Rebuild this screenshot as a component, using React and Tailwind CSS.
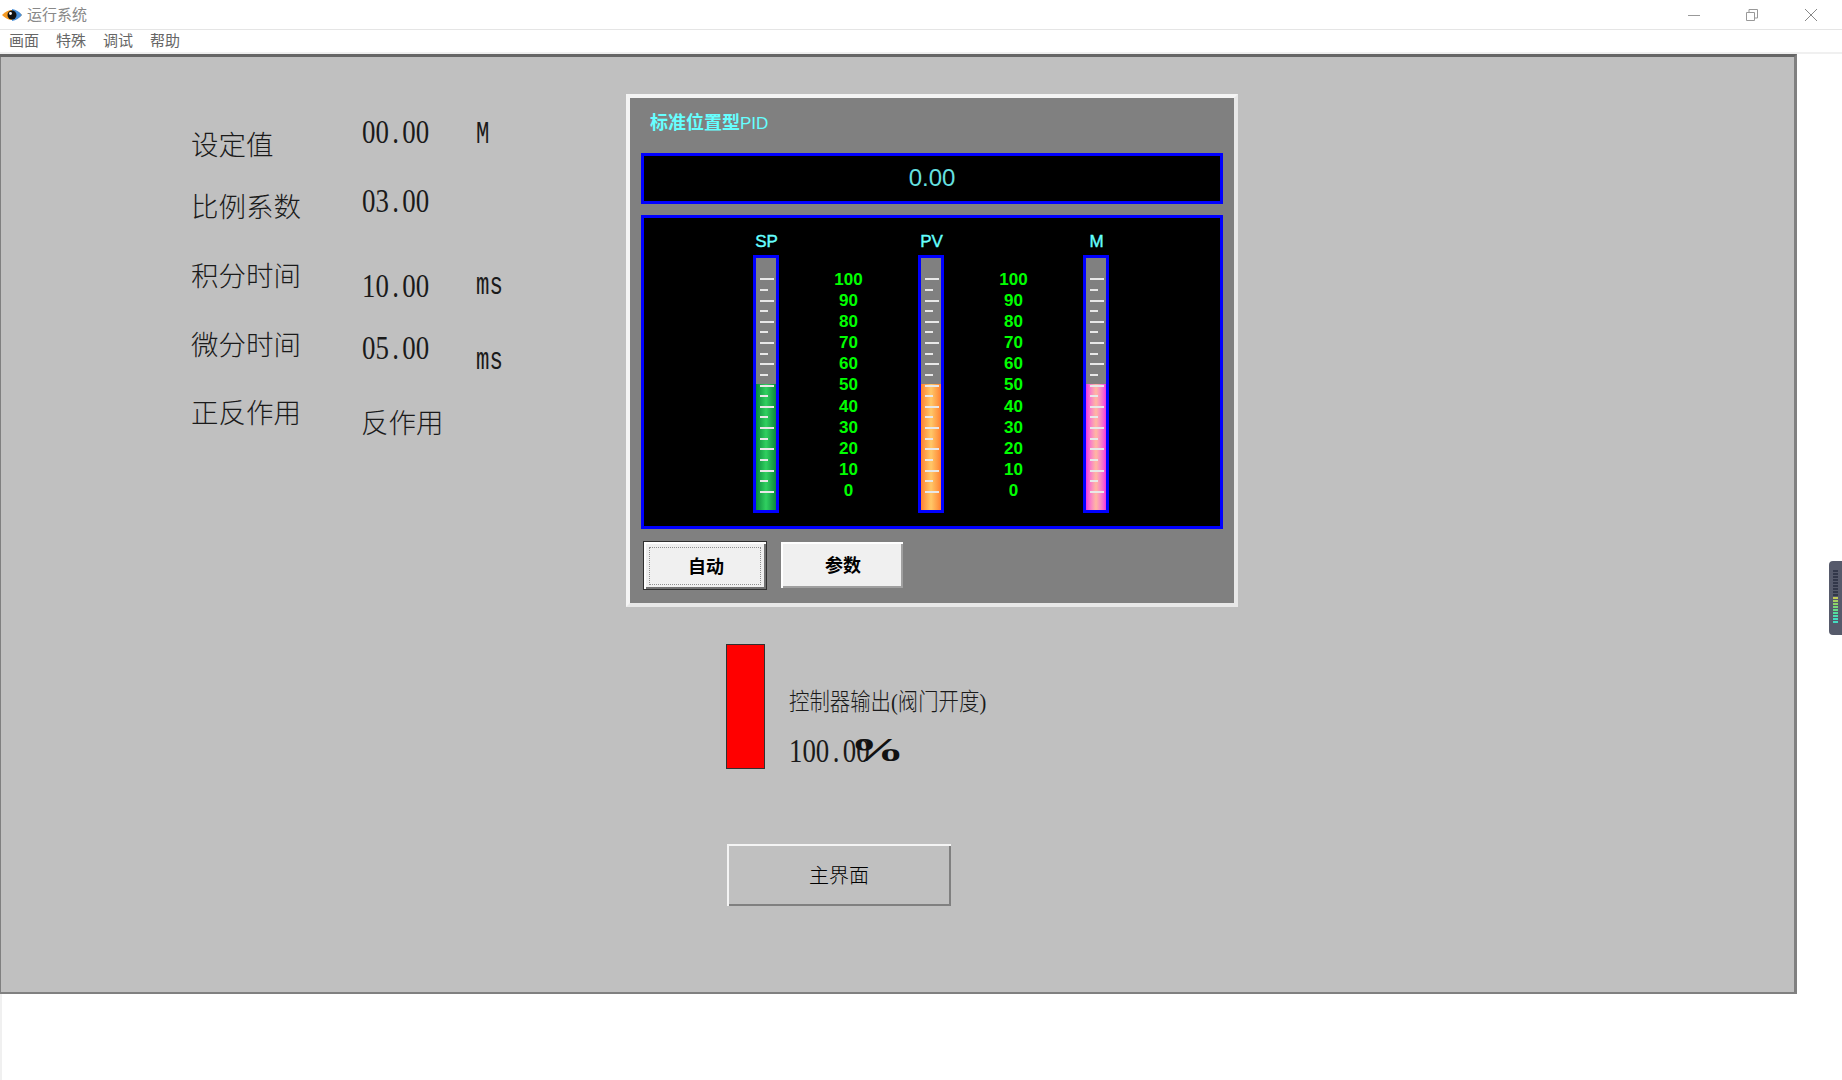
import React from 'react';

const ticks = Array.from({ length: 21 }, (_, i) => i);
const scale = [100, 90, 80, 70, 60, 50, 40, 30, 20, 10, 0];

const Bar = ({ label, fill }) => (
  <div className="flex w-[26px] flex-col items-center">
    <div className="flex h-[37px] w-[50px] items-start justify-center pt-[15px] pl-[1px] text-[17px] leading-[18px] text-[#66ffff] [-webkit-text-stroke:0.4px_#66ffff]">
      {label}
    </div>
    <div className="relative h-[258px] w-[26px] overflow-hidden border-[3px] border-[#0000ff] bg-[#808080]">
      <div className={`absolute bottom-0 left-0 h-[126px] w-full ${fill}`} />
      <div className="relative flex flex-col pt-[16px] pl-[4px]">
        {ticks.map((i) => (
          <div key={i} className="flex h-[10.63px] items-center">
            <div className={`h-[2px] bg-[#e8e8e8] ${i % 2 === 0 ? 'w-[14px]' : 'w-[8px]'}`} />
          </div>
        ))}
      </div>
    </div>
  </div>
);

const Scale = () => (
  <div className="flex w-[139px] flex-col pt-[51px] text-center text-[17px] font-bold text-[#00ff00]">
    {scale.map((n) => (
      <div key={n} className="h-[21.1px] leading-[21.1px]">{n}</div>
    ))}
  </div>
);

// half-width numbers of the HMI font: tall and narrow, the dot takes a full cell
const Num = ({ className, children }) => (
  <div className={`absolute origin-left scale-x-[0.79] whitespace-nowrap font-['Liberation_Serif',serif] text-[34px] leading-[36px] text-[#1a1a1a] ${className}`}>
    {children.split('').map((c, i) => (
      <span key={i} className="inline-block w-[17px] text-center">{c}</span>
    ))}
  </div>
);

const Unit = ({ className, children }) => (
  <div className={`absolute origin-left scale-x-[0.72] font-['Liberation_Mono',monospace] text-[31px] leading-[36px] text-[#1a1a1a] ${className}`}>
    {children}
  </div>
);

const Label = ({ className, children }) => (
  <div className={`absolute whitespace-nowrap text-[27.5px] leading-[32px] font-light text-[#1a1a1a] ${className}`}>
    {children}
  </div>
);

const Panel = () => (
  <div className="absolute top-[37px] left-[626px] h-[513px] w-[612px] border-[4px] border-t-[#f4f4f4] border-r-[#e8e8e8] border-b-[#e8e8e8] border-l-[#f4f4f4] bg-[#808080] px-[11px]">
    <div className="flex h-[55px] items-center pb-[4px] pl-[9px] text-[18px] font-bold text-[#66ffff]">
      标准位置型<span className="font-['Liberation_Sans',sans-serif] text-[17px] font-normal">PID</span>
    </div>
    <div className="flex h-[51px] w-[582px] items-center justify-center border-[3px] border-[#0000ff] bg-black pb-[1px] font-['Liberation_Sans',sans-serif] text-[24px] text-[#66e0e0]">
      0.00
    </div>
    <div className="mt-[11px] flex h-[314px] w-[582px] border-[3px] border-[#0000ff] bg-black pl-[109px] font-['Liberation_Sans',sans-serif]">
      <Bar label="SP" fill="bg-gradient-to-r from-[#0a8a3c] via-[#30d060] to-[#0a8a3c]" />
      <Scale />
      <Bar label="PV" fill="bg-gradient-to-r from-[#ff8030] via-[#ffc868] to-[#ff8030]" />
      <Scale />
      <Bar label="M" fill="bg-gradient-to-r from-[#f030e0] via-[#ffb8a0] to-[#f030e0]" />
    </div>
    <div className="mt-[12px] ml-[2px] flex items-start">
      <button className="flex h-[49px] w-[124px] items-center justify-center border border-[#303030] bg-[#f0f0f0] text-[18px] font-bold text-black shadow-[inset_2px_2px_0_#ffffff,inset_-2px_-2px_0_#707070]">
        <span className="flex h-[38px] w-[112px] items-center justify-center border border-dotted border-[#909090] pt-[3px] pl-[2px]">自动</span>
      </button>
      <button className="ml-[14px] mt-[1px] flex h-[46px] w-[122px] items-center justify-center bg-[#f0f0f0] pt-[3px] pl-[2px] text-[18px] font-bold text-black shadow-[inset_2px_2px_0_#ffffff,inset_-2px_-2px_0_#a0a0a0]">
        参数
      </button>
    </div>
  </div>
);

const Canvas = () => (
  <div className="relative h-[940px] w-[1797px] border-t-[3px] border-r-[3px] border-b-[2px] border-t-[#666666] border-r-[#808080] border-b-[#808080] bg-[#c0c0c0] shadow-[inset_1px_0_0_#808080]">
    <Label className="top-[73px] left-[191px]">设定值</Label>
    <Label className="top-[135px] left-[191px]">比例系数</Label>
    <Label className="top-[204px] left-[191px]">积分时间</Label>
    <Label className="top-[273px] left-[191px]">微分时间</Label>
    <Label className="top-[341px] left-[191px]">正反作用</Label>
    <Label className="top-[351px] left-[361px]">反作用</Label>

    <Num className="top-[57px] left-[362px]">00.00</Num>
    <Num className="top-[126px] left-[362px]">03.00</Num>
    <Num className="top-[211px] left-[362px]">10.00</Num>
    <Num className="top-[273px] left-[362px]">05.00</Num>
    <Unit className="top-[60px] left-[476px]">M</Unit>
    <Unit className="top-[211px] left-[476px]">ms</Unit>
    <Unit className="top-[286px] left-[476px]">ms</Unit>

    <Panel />

    <div className="absolute top-[587px] left-[726px] h-[125px] w-[39px] border border-[#303030] bg-[#ff0000]" />
    <div className="absolute top-[630px] left-[789px] origin-left scale-x-[0.85] whitespace-nowrap text-[24px] leading-[30px] font-light text-[#1a1a1a]">
      控制器输出(阀门开度)
    </div>
    <Num className="top-[676px] left-[789px]">100.00</Num>
    <div className="absolute top-[673px] left-[850px] origin-left scale-x-[1.6] font-['Liberation_Serif',serif] text-[34px] leading-[40px] font-bold text-[#111111]">%</div>

    <button className="absolute top-[787px] left-[727px] flex h-[62px] w-[224px] items-center justify-center bg-[#c0c0c0] pt-[1px] text-[20px] font-light text-black shadow-[inset_2px_2px_0_#f4f4f4,inset_-2px_-2px_0_#808080]">
      主界面
    </button>
  </div>
);

const App = () => (
  <div className="relative h-[1080px] w-[1842px] overflow-hidden bg-white font-['Liberation_Serif','Noto_Sans_CJK_SC',sans-serif]">
    <header className="flex h-[30px] items-center justify-between border-b border-[#e5e5e5] pl-[2px] font-['Noto_Sans_CJK_SC',sans-serif]">
      <div className="flex items-center gap-[5px]">
        <svg width="20" height="14" viewBox="0 0 20 14">
          <path d="M0 7 Q10 -3 20 7 Q10 17 0 7Z" fill="#f59a23" />
          <path d="M10 1 Q16 2 20 7 Q16 12 10 13Z" fill="#4a90d9" />
          <circle cx="10" cy="7" r="4.5" fill="#111111" />
          <circle cx="8.5" cy="5.5" r="1.4" fill="#ffffff" />
        </svg>
        <span className="text-[15px] text-[#888888]">运行系统</span>
      </div>
      <div className="flex items-center pr-[25px]">
        <svg width="12" height="12" viewBox="0 0 12 12" className="mr-[46px]"><path d="M0 6.5H12" stroke="#999999" /></svg>
        <svg width="12" height="12" viewBox="0 0 12 12" className="mr-[47px]" fill="none" stroke="#999999"><path d="M0.5 3.5H8.5V11.5H0.5Z M3 3V0.5H11.5V9H9" /></svg>
        <svg width="12" height="12" viewBox="0 0 12 12" stroke="#888888"><path d="M0 0L12 12M12 0L0 12" /></svg>
      </div>
    </header>
    <nav className="flex h-[24px] items-center gap-[17px] border-b-2 border-[#f0f0f0] pb-[2px] pl-[9px] font-['Noto_Sans_CJK_SC',sans-serif] text-[15px] text-[#666666]">
      <span>画面</span>
      <span>特殊</span>
      <span>调试</span>
      <span>帮助</span>
    </nav>
    <Canvas />
    <div className="h-[86px] border-l-2 border-[#f0f0f0]" />
    <div className="absolute top-[561px] right-0 flex h-[74px] w-[13px] flex-col items-center gap-[1px] rounded-l-[4px] bg-[#565a6b] pt-[9px] pr-[1px]">
      {['#33384a', '#33384a', '#33384a', '#33384a', '#33384a', '#33384a', '#33384a', '#33384a', '#33384a', '#c2cc55', '#a6d060', '#8ed468', '#7ad878', '#66dc88', '#55dc9c', '#4cdcb0', '#44dcc0', '#44dcc0'].map((c, i) => (
        <div key={i} className="h-[2px] w-[5px]" style={{ backgroundColor: c }} />
      ))}
    </div>
  </div>
);

export default App;
